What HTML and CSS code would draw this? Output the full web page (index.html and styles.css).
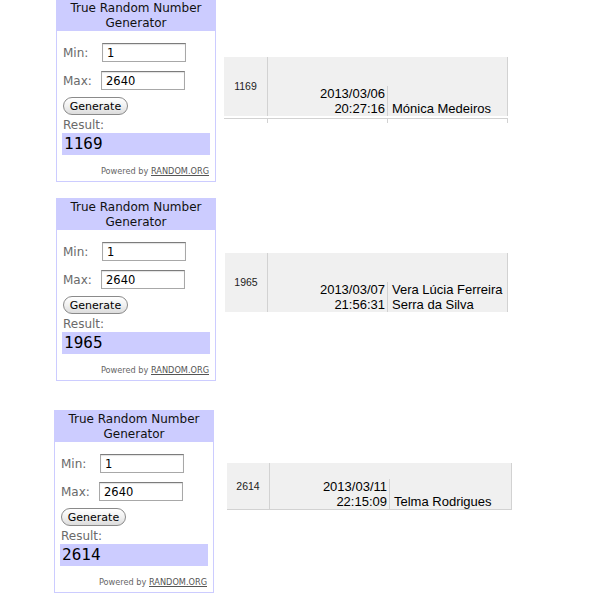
FILE: index.html
```html
<!DOCTYPE html>
<html lang="pt">
<head>
    <meta charset="UTF-8">
    <title>Sorteio</title>
    <link rel="stylesheet" href="styles.css">
</head>
<body>
    <div class="entry entry-one">
        <div class="rng">
            <div class="rng-title">True Random Number<br>Generator</div>
            <div class="rng-body">
                <div class="rng-field"><span class="rng-label">Min:</span><input class="rng-input" value="1"></div>
                <div class="rng-field"><span class="rng-label">Max:</span><input class="rng-input rng-input-max" value="2640"></div>
                <button class="rng-button">Generate</button>
                <div class="rng-label rng-result-label">Result:</div>
                <div class="rng-result">1169</div>
                <div class="rng-credit">Powered by <a href="#">RANDOM.ORG</a></div>
            </div>
        </div>
        <div class="record">
            <div class="record-row">
                <div class="cell cell-id">1169</div>
                <div class="cell cell-date">2013/03/06<br>20:27:16</div>
                <div class="cell cell-name">Mónica Medeiros</div>
            </div>
            <div class="record-row record-next">
                <div class="cell"></div>
                <div class="cell"></div>
                <div class="cell"></div>
            </div>
        </div>
    </div>

    <div class="entry entry-two">
        <div class="rng">
            <div class="rng-title">True Random Number<br>Generator</div>
            <div class="rng-body">
                <div class="rng-field"><span class="rng-label">Min:</span><input class="rng-input" value="1"></div>
                <div class="rng-field"><span class="rng-label">Max:</span><input class="rng-input rng-input-max" value="2640"></div>
                <button class="rng-button">Generate</button>
                <div class="rng-label rng-result-label">Result:</div>
                <div class="rng-result">1965</div>
                <div class="rng-credit">Powered by <a href="#">RANDOM.ORG</a></div>
            </div>
        </div>
        <div class="record">
            <div class="record-row">
                <div class="cell cell-id">1965</div>
                <div class="cell cell-date">2013/03/07<br>21:56:31</div>
                <div class="cell cell-name">Vera Lúcia Ferreira<br>Serra da Silva</div>
            </div>
        </div>
    </div>

    <div class="entry entry-three">
        <div class="rng">
            <div class="rng-title">True Random Number<br>Generator</div>
            <div class="rng-body">
                <div class="rng-field"><span class="rng-label">Min:</span><input class="rng-input" value="1"></div>
                <div class="rng-field"><span class="rng-label">Max:</span><input class="rng-input rng-input-max" value="2640"></div>
                <button class="rng-button">Generate</button>
                <div class="rng-label rng-result-label">Result:</div>
                <div class="rng-result">2614</div>
                <div class="rng-credit">Powered by <a href="#">RANDOM.ORG</a></div>
            </div>
        </div>
        <div class="record">
            <div class="record-row">
                <div class="cell cell-id">2614</div>
                <div class="cell cell-date">2013/03/11<br>22:15:09</div>
                <div class="cell cell-name">Telma Rodrigues</div>
            </div>
        </div>
    </div>
</body>
</html>
```

FILE: styles.css
```css
body {
    margin: 0;
    background: #fff;
    font-family: "DejaVu Sans", Verdana, sans-serif;
    color: #000;
}
.entry {
    display: flex;
    align-items: flex-start;
}
.entry-one {
    margin-top: -1px;
    padding-left: 56px;
}
.entry-two {
    margin-top: 16px;
    padding-left: 56px;
}
.entry-three {
    margin-top: 29px;
    padding-left: 54px;
}

/* random.org widget */
.rng {
    width: 160px;
    box-sizing: border-box;
    border: 1px solid #ccccff;
    background: #fff;
}
.rng-title {
    background: #ccccff;
    height: 31px;
    box-sizing: border-box;
    padding-top: 1px;
    text-align: center;
    font-size: 12px;
    line-height: 15px;
    color: #111;
}
.rng-body {
    padding: 12px 5px 0;
}
.rng-field {
    display: flex;
    align-items: center;
    height: 19px;
    margin-bottom: 9px;
}
.rng-label {
    font-size: 12px;
    color: #6a6a6a;
    padding-left: 1px;
    width: 39px;
}
.rng-input {
    width: 84px;
    height: 19px;
    box-sizing: border-box;
    border: 1px solid #a8a8a8;
    border-top-color: #7c7c7c;
    box-shadow: inset 0 1px 1px rgba(0, 0, 0, 0.12);
    padding: 0 4px;
    font-family: "DejaVu Sans", Verdana, sans-serif;
    font-size: 11.5px;
    color: #000;
    margin: 0;
}
.rng-input-max {
    margin-left: -1px;
}
.rng-button {
    display: block;
    margin: -2px 0 0 1px;
    width: 65px;
    height: 18px;
    padding: 0;
    border: 1px solid #8a8a8a;
    border-radius: 9px;
    background: linear-gradient(#ffffff, #f1f1f1 50%, #dcdcdc);
    font-family: "DejaVu Sans", Verdana, sans-serif;
    font-size: 11px;
    color: #000;
}
.rng-result-label {
    width: auto;
    margin-top: 3px;
    line-height: 14px;
}
.rng-result {
    background: #ccccff;
    height: 22px;
    margin-top: 1px;
    padding-left: 2px;
    font-family: "DejaVu Sans Mono", monospace;
    font-size: 16px;
    line-height: 22px;
    color: #000;
}
.rng-credit {
    text-align: right;
    font-size: 8.2px;
    color: #666;
    padding: 9px 1px 0 0;
    height: 17px;
    line-height: 14px;
}
.rng-credit a {
    color: #555;
    text-decoration: underline;
}

/* copied spreadsheet row */
.record-row {
    display: grid;
    grid-template-columns: 44px 120px 120px;
    background: #f0f0f0;
    font-family: "Liberation Sans", Arial, sans-serif;
    font-size: 13px;
    line-height: 15px;
    color: #000;
}
.cell {
    border-right: 1px solid #d2d2d2;
    box-sizing: border-box;
}
.cell-id {
    display: flex;
    align-items: center;
    justify-content: center;
    font-size: 10.5px;
    color: #222;
}
.cell-date {
    align-self: end;
    text-align: right;
    padding-right: 2px;
}
.cell-name {
    display: flex;
    align-items: flex-end;
    padding-left: 4px;
}
.record-next {
    height: 4px;
    margin-top: 2px;
    background: #fff;
    border-top: 1px solid #d2d2d2;
}
.entry-one .record {
    margin: 58px 0 0 8px;
}
.entry-one .record-row:first-child {
    height: 59px;
}
.entry-two .record {
    margin: 55px 0 0 9px;
}
.entry-two .record-row {
    grid-template-columns: 43px 120px 120px;
    height: 59px;
}
.entry-three .record {
    margin: 53px 0 0 13px;
}
.entry-three .record-row {
    grid-template-columns: 43px 120px 122px;
    height: 46px;
    border-bottom: 1px solid #d2d2d2;
}
```
